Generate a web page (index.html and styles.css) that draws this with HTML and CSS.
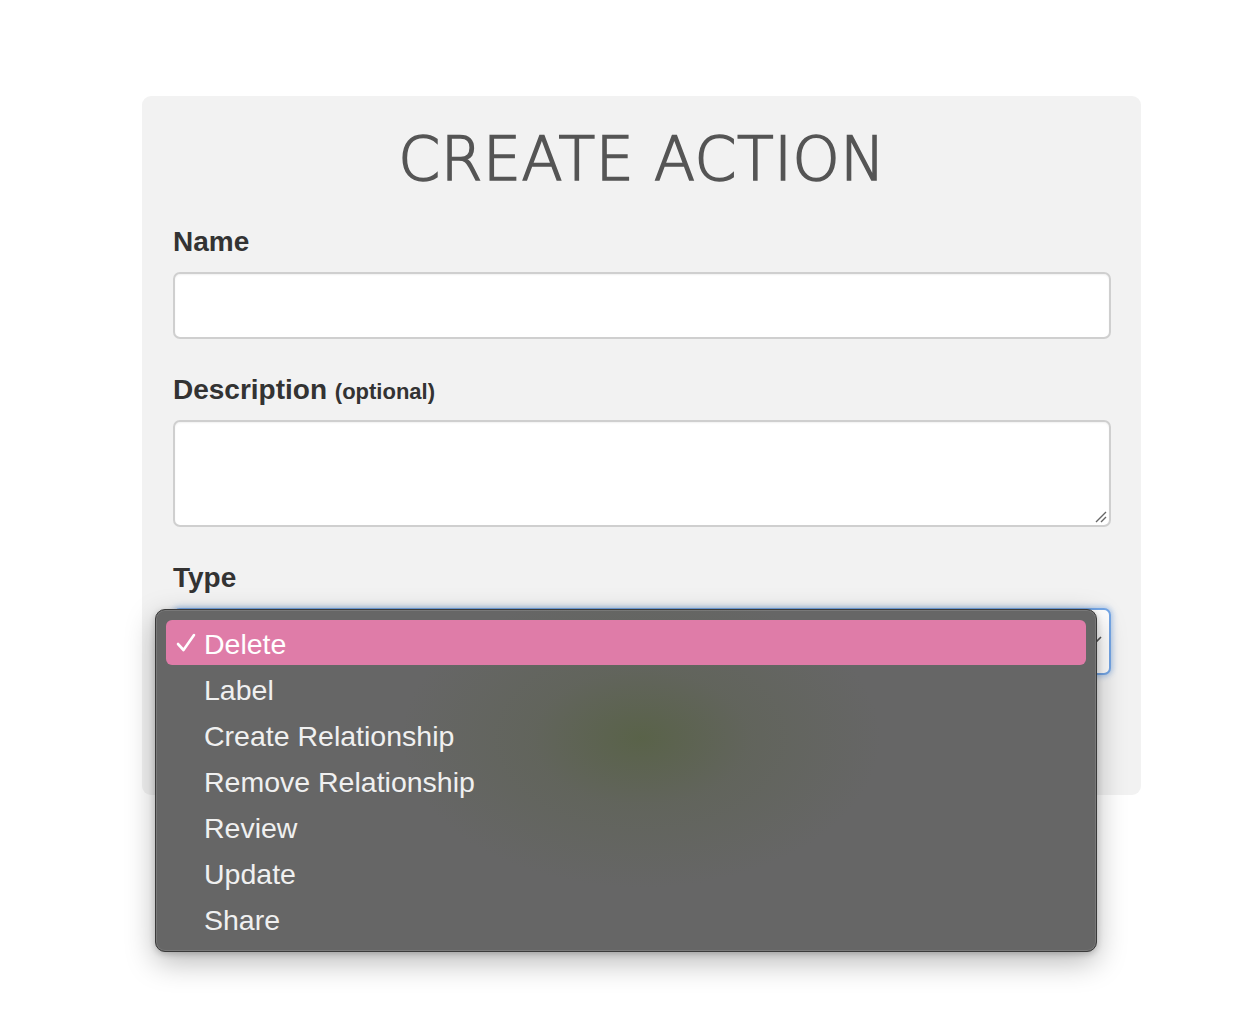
FILE: index.html
```html
<!DOCTYPE html>
<html lang="en">
<head>
<meta charset="utf-8">
<title>Create Action</title>
<link rel="stylesheet" href="styles.css">
</head>
<body>
<div class="page">
<div class="card">
  <h1 class="title">CREATE ACTION</h1>
  <label class="label">Name</label>
  <div class="input"></div>
  <label class="label">Description <span class="opt">(optional)</span></label>
  <div class="textarea">
    <svg class="grip" width="14" height="14" viewBox="0 0 14 14"><path d="M13 3 L3 13 M13 8 L8 13" stroke="#666" stroke-width="1.4" fill="none"/></svg>
  </div>
  <label class="label">Type</label>
  <div class="select-wrap">
    <div class="select">
      <svg class="chev" width="14" height="10" viewBox="0 0 14 10"><path d="M2 2 L7 7 L12 2" stroke="#555" stroke-width="1.6" fill="none"/></svg>
    </div>
    <div class="menu">
      <div class="item selected"><svg class="check" width="20" height="20" viewBox="0 0 20 20"><path d="M2 11 L7.5 17 L18 2" stroke="#fff" stroke-width="2.6" fill="none" stroke-linecap="round" stroke-linejoin="round"/></svg>Delete</div>
      <div class="item">Label</div>
      <div class="item">Create Relationship</div>
      <div class="item">Remove Relationship</div>
      <div class="item">Review</div>
      <div class="item">Update</div>
      <div class="item">Share</div>
    </div>
  </div>
  <div class="spacer"></div>
</div>
</div>
</body>
</html>
```
FILE: styles.css
```css
html, body {
  margin: 0;
  padding: 0;
  background: #ffffff;
}
body {
  font-family: "Liberation Sans", Arial, sans-serif;
  color: #333;
}
.page {
  height: 1020px;
  padding-top: 96px;
  box-sizing: border-box;
}
.card {
  box-sizing: border-box;
  width: 999px;
  height: 699px;
  margin: 0 0 0 142px;
  padding: 33px 30px 0 31px;
  background: #f2f2f2;
  border-radius: 9px;
  display: flex;
  flex-direction: column;
}
.title {
  margin: 0;
  font-family: "DejaVu Sans", sans-serif;
  font-weight: 200;
  font-size: 60px;
  line-height: 60px;
  letter-spacing: 0.6px;
  text-align: center;
  color: #555;
  -webkit-text-stroke: 1.6px #555;
}
.label {
  display: block;
  font-size: 28px;
  line-height: 32px;
  font-weight: bold;
  color: #333;
  margin: 35px 0 14px;
}
.title + .label {
  margin-top: 37px;
}
.opt {
  font-size: 22px;
  line-height: 1;
}
.input, .textarea, .select {
  box-sizing: border-box;
  width: 938px;
  background: #fff;
  border: 2px solid #cfcfcf;
  border-radius: 7px;
  box-shadow: inset 0 1px 2px rgba(0,0,0,0.06);
}
.input {
  height: 67px;
}
.textarea {
  height: 107px;
  position: relative;
}
.grip {
  position: absolute;
  right: 2px;
  bottom: 2px;
}
.select-wrap {
  position: relative;
}
.select {
  height: 67px;
  border: 2px solid #74a6e6;
  box-shadow: 0 0 5px 2px rgba(110,160,225,0.45);
  position: relative;
}
.chev {
  position: absolute;
  right: 6px;
  top: 25px;
}
.menu {
  position: absolute;
  left: -18px;
  top: 1px;
  box-sizing: border-box;
  width: 942px;
  height: 343px;
  padding: 10px 10px;
  border: 1px solid #3a3a3a;
  border-radius: 10px;
  background:
    radial-gradient(ellipse 240px 150px at 485px 128px, rgba(88,98,70,0.9) 0%, rgba(94,99,84,0.55) 45%, rgba(102,102,102,0) 100%),
    #666666;
  box-shadow: inset 0 0 0 1px rgba(255,255,255,0.12), 0 10px 30px rgba(0,0,0,0.28), 0 2px 6px rgba(0,0,0,0.2);
  display: flex;
  flex-direction: column;
}
.item {
  height: 46px;
  line-height: 49px;
  padding-left: 38px;
  font-size: 28.5px;
  color: #f0f0f0;
  position: relative;
  border-radius: 6px;
}
.item.selected {
  height: 45px;
  line-height: 48px;
  margin-bottom: 1px;
  background: #df7ca8;
  color: #fff;
}
.check {
  position: absolute;
  left: 10px;
  top: 13px;
}
.spacer {
  flex: 1;
}
```
